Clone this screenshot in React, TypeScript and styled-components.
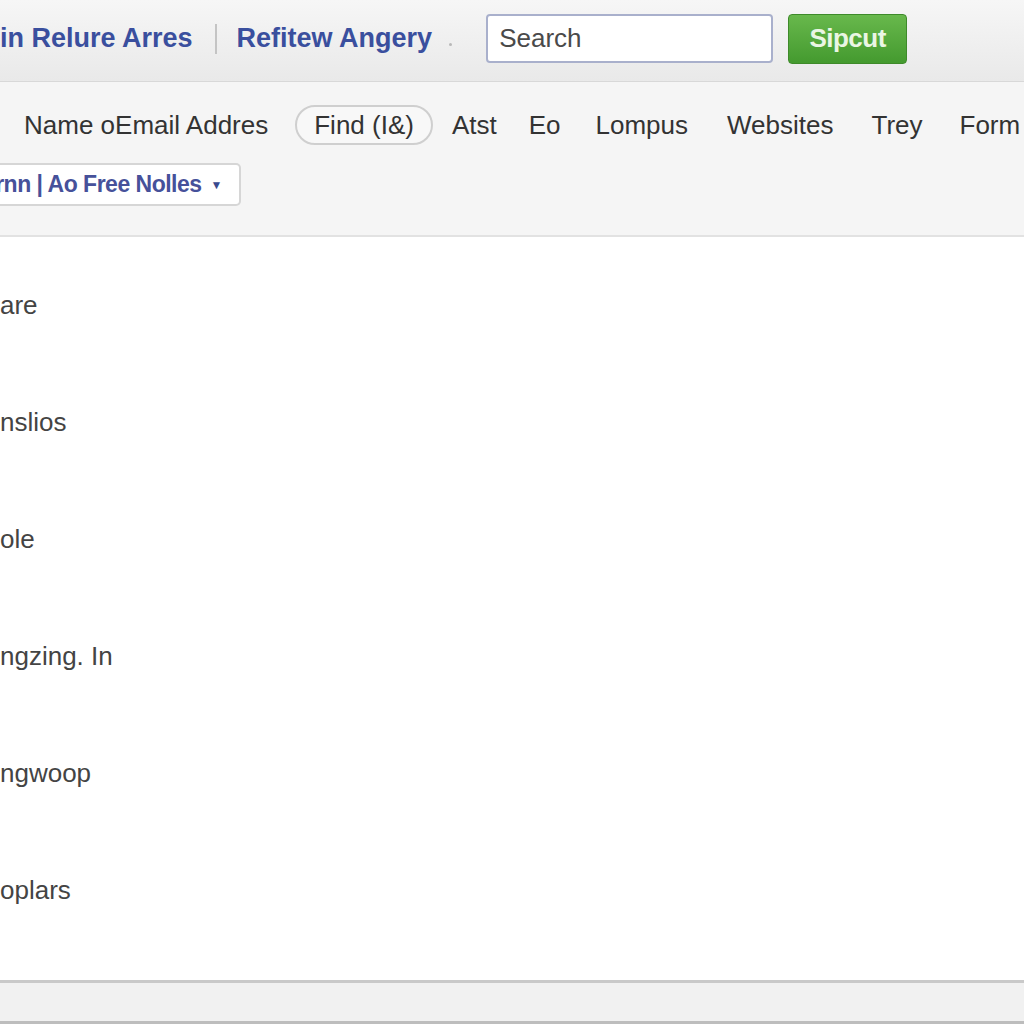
import styled, { createGlobalStyle } from 'styled-components';

const GlobalStyle = createGlobalStyle`
  html, body {
    margin: 0;
    padding: 0;
    background: #ffffff;
    font-family: "Liberation Sans", Arial, sans-serif;
  }
`;

const Page = styled.div`
  width: 1024px;
  height: 1024px;
  display: flex;
  flex-direction: column;
  overflow: hidden;
  background: #ffffff;
`;

const TopBar = styled.header`
  height: 82px;
  flex-shrink: 0;
  display: flex;
  align-items: center;
  padding-bottom: 4px;
  box-sizing: border-box;
  background: linear-gradient(#f6f6f6, #e9e9e9);
  border-bottom: 1px solid #d8d8d8;
`;

const TopLink = styled.a`
  font-size: 27px;
  font-weight: bold;
  color: #3a4f9e;
  text-decoration: none;
  white-space: nowrap;
`;

const Divider = styled.span`
  width: 2px;
  height: 30px;
  background: #c4c4c4;
  margin: 0 20px 0 22px;
`;

const Dot = styled.span`
  width: 3px;
  height: 3px;
  border-radius: 50%;
  background: #b8b8b8;
  margin: 12px 34px 0 17px;
`;

const SearchBox = styled.input`
  width: 287px;
  height: 49px;
  box-sizing: border-box;
  border: 2px solid #a9b0cc;
  border-radius: 4px;
  padding: 0 11px;
  font-family: "Liberation Sans", Arial, sans-serif;
  font-size: 26px;
  color: #444;
  background: #fff;
  &::placeholder {
    color: #4a4a4a;
  }
`;

const GreenButton = styled.button`
  margin-left: 15px;
  width: 119px;
  height: 50px;
  border: 1px solid #3e8a2a;
  border-radius: 4px;
  background: linear-gradient(#68b84c, #449a2f);
  color: #eaf6e4;
  font-family: "Liberation Sans", Arial, sans-serif;
  font-size: 26px;
  font-weight: bold;
  letter-spacing: -0.5px;
`;

const SubBar = styled.div`
  height: 155px;
  flex-shrink: 0;
  box-sizing: border-box;
  background: #f5f5f5;
  border-bottom: 2px solid #e2e2e2;
  display: flex;
  flex-direction: column;
  padding-top: 23px;
`;

const NavRow = styled.nav`
  display: flex;
  align-items: center;
  padding-left: 24px;
  height: 40px;
`;

const NavItem = styled.span<{ $gap: number }>`
  font-size: 26px;
  color: #333;
  white-space: nowrap;
  margin-right: ${(p) => p.$gap}px;
`;

const Pill = styled.span`
  font-size: 26px;
  color: #333;
  height: 40px;
  box-sizing: border-box;
  padding: 0 17px;
  border: 2px solid #cfcfcf;
  border-radius: 20px;
  display: flex;
  align-items: center;
  background: #f8f8f8;
  margin-right: 19px;
  white-space: nowrap;
`;

const DropRow = styled.div`
  margin-top: 18px;
  display: flex;
`;

const Dropdown = styled.button`
  height: 43px;
  width: 241px;
  box-sizing: border-box;
  border: 2px solid #d6d6d6;
  border-left: none;
  border-radius: 0 5px 5px 0;
  background: #ffffff;
  display: flex;
  align-items: center;
  justify-content: flex-end;
  padding: 0 17px 0 0;
  font-family: "Liberation Sans", Arial, sans-serif;
  font-size: 23px;
  font-weight: bold;
  color: #46519a;
  letter-spacing: -0.5px;
  white-space: nowrap;
`;

const Caret = styled.span`
  font-size: 12px;
  margin-left: 9px;
  color: #3a4a8e;
`;

const Content = styled.main`
  flex: 1;
  display: flex;
  flex-direction: column;
  padding-top: 54px;
  gap: 88px;
  background: #ffffff;
`;

const ListItem = styled.div`
  font-size: 26px;
  color: #444;
  line-height: 29px;
  white-space: nowrap;
`;

const Footer = styled.footer`
  height: 38px;
  flex-shrink: 0;
  background: #f1f1f1;
  border-top: 3px solid #c9c9c9;
  border-bottom: 3px solid #bdbdbd;
`;

const navItems = [
  { label: 'Atst', gap: 32 },
  { label: 'Eo', gap: 35 },
  { label: 'Lompus', gap: 39 },
  { label: 'Websites', gap: 38 },
  { label: 'Trey', gap: 37 },
  { label: 'Form', gap: 0 },
];

const listItems = ['are', 'nslios', 'ole', 'ngzing. In', 'ngwoop', 'oplars'];

export default function App() {
  return (
    <Page>
      <GlobalStyle />
      <TopBar>
        <TopLink>in Relure Arres</TopLink>
        <Divider />
        <TopLink>Refitew Angery</TopLink>
        <Dot />
        <SearchBox placeholder="Search" />
        <GreenButton>Sipcut</GreenButton>
      </TopBar>
      <SubBar>
        <NavRow>
          <NavItem $gap={27}>Name oEmail Addres</NavItem>
          <Pill>Find (I&amp;)</Pill>
          {navItems.map((item) => (
            <NavItem key={item.label} $gap={item.gap}>
              {item.label}
            </NavItem>
          ))}
        </NavRow>
        <DropRow>
          <Dropdown>
            rnn | Ao Free Nolles<Caret>▼</Caret>
          </Dropdown>
        </DropRow>
      </SubBar>
      <Content>
        {listItems.map((text) => (
          <ListItem key={text}>{text}</ListItem>
        ))}
      </Content>
      <Footer />
    </Page>
  );
}
